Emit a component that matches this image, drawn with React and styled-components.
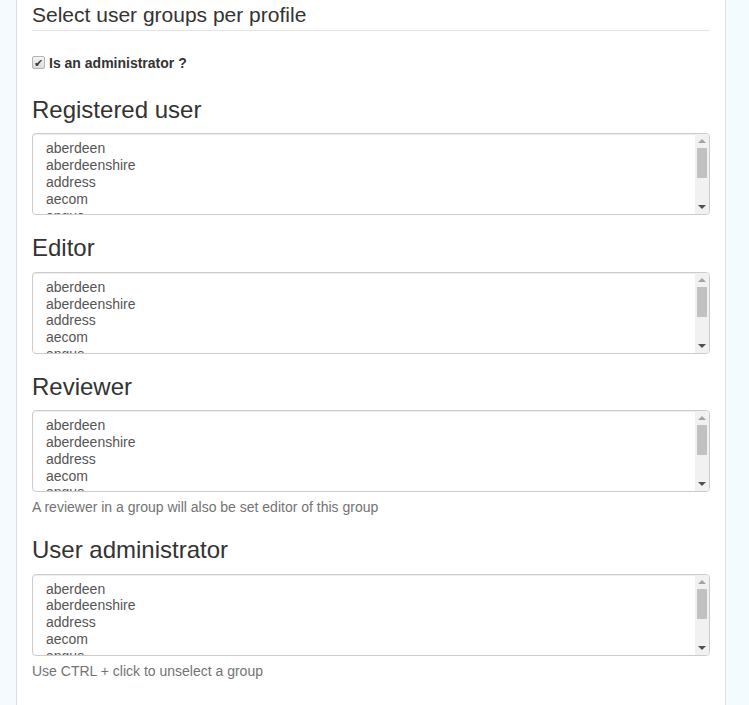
import React from 'react';
import styled, { createGlobalStyle } from 'styled-components';

const GlobalStyle = createGlobalStyle`
  html, body {
    margin: 0;
    padding: 0;
    background: #f4fbff;
  }
  body {
    font-family: "Liberation Sans", Arial, Helvetica, sans-serif;
    font-size: 14px;
    line-height: 1.42857;
    color: #333;
  }
  * { box-sizing: border-box; }
`;

const Page = styled.div`
  padding-left: 16px;
  height: 705px;
  overflow: hidden;
`;

const Panel = styled.div`
  width: 710px;
  min-height: 705px;
  background: #fff;
  border-left: 1px solid #ddd;
  border-right: 1px solid #ddd;
  padding: 0 15px;
`;

const Legend = styled.div`
  font-size: 21px;
  line-height: 30px;
  color: #333;
  border-bottom: 1px solid #e5e5e5;
`;

const CheckRow = styled.div`
  margin-top: 22px;
  margin-bottom: 24px;
  position: relative;
  padding-left: 17px;
  line-height: 20px;
`;

const Check = styled.input`
  appearance: none;
  position: absolute;
  left: 0;
  top: 3px;
  width: 13px;
  height: 13px;
  margin: 0;
  border: 1px solid #b4b4b4;
  border-radius: 2px;
  background: linear-gradient(#f4f4f4, #dcdcdc);

  &::after {
    content: '✔';
    position: absolute;
    left: 1px;
    top: -4px;
    font-size: 11px;
    line-height: 20px;
    color: #3c3c3c;
  }
`;

const CheckLabel = styled.label`
  font-weight: bold;
  font-size: 14px;
`;

const Heading = styled.h3`
  font-size: 24px;
  font-weight: 500;
  line-height: 1.1;
  margin: 20px 0 10px;
  color: #333;
`;

const SelectBox = styled.div`
  position: relative;
`;

const GroupSelect = styled.select`
  display: block;
  width: 100%;
  height: 82px;
  padding: 6px 14px 6px 13px;
  font-family: "Liberation Sans", Arial, Helvetica, sans-serif;
  font-size: 14px;
  line-height: 17px;
  color: #555;
  background: #fff;
  border: 1px solid #ccc;
  border-radius: 4px;
  box-shadow: inset 0 1px 1px rgba(0, 0, 0, 0.075);
  outline: none;
  overflow-y: scroll;

  option {
    padding: 0;
    line-height: 17px;
  }
`;

/* the browser hides native scrollbars here, so the list's bar is drawn */
const ScrollBar = styled.div`
  position: absolute;
  top: 1px;
  right: 1px;
  bottom: 1px;
  width: 14px;
  display: flex;
  flex-direction: column;
  background: #f1f1f1;
  border-radius: 0 3px 3px 0;
  pointer-events: none;
`;

const ScrollButton = styled.div`
  height: 14px;
  flex: none;
  display: flex;
  align-items: center;
  justify-content: center;

  &::before {
    content: '';
    width: 0;
    height: 0;
    border-left: 4px solid transparent;
    border-right: 4px solid transparent;
    ${({ $down }) => ($down
      ? 'border-top: 4px solid #505050;'
      : 'border-bottom: 4px solid #a3a3a3;')}
  }
`;

const Track = styled.div`
  flex: 1;
  padding: 0 2px;
`;

const Thumb = styled.div`
  height: 30px;
  background: #c1c1c1;
`;

const Help = styled.p`
  margin: 5px 0 10px;
  color: #737373;
  font-size: 14px;
  line-height: 20px;
`;

const groups = [
  'aberdeen', 'aberdeenshire', 'address', 'aecom', 'angus', 'argyll',
  'bgs', 'cefas', 'defra', 'dundee', 'edinburgh', 'fife', 'glasgow',
  'highland', 'jncc', 'marine', 'moray', 'orkney', 'perth', 'sepa',
  'shetland', 'sgov', 'stirling',
];

const profiles = [
  { title: 'Registered user' },
  { title: 'Editor' },
  { title: 'Reviewer', help: 'A reviewer in a group will also be set editor of this group' },
  { title: 'User administrator', help: 'Use CTRL + click to unselect a group' },
];

const ProfileGroups = ({ title, help }) => (
  <div>
    <Heading>{title}</Heading>
    <SelectBox>
      <GroupSelect multiple defaultValue={[]}>
        {groups.map((g) => (
          <option key={g} value={g}>{g}</option>
        ))}
      </GroupSelect>
      <ScrollBar>
        <ScrollButton />
        <Track>
          <Thumb />
        </Track>
        <ScrollButton $down />
      </ScrollBar>
    </SelectBox>
    {help && <Help>{help}</Help>}
  </div>
);

const App = () => (
  <>
    <GlobalStyle />
    <Page>
      <Panel>
        <Legend>Select user groups per profile</Legend>
        <CheckRow>
          <Check type="checkbox" id="isAdmin" defaultChecked />
          <CheckLabel htmlFor="isAdmin">Is an administrator ?</CheckLabel>
        </CheckRow>
        {profiles.map((p) => (
          <ProfileGroups key={p.title} title={p.title} help={p.help} />
        ))}
      </Panel>
    </Page>
  </>
);

export default App;
